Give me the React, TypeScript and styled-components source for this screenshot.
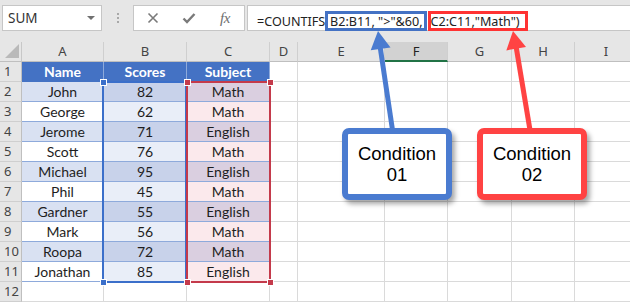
import React from 'react'
import styled, { createGlobalStyle, css } from 'styled-components'

const UI_FONT = `"Noto Sans", "Open Sans", sans-serif`
const CELL_FONT = `Lato, "Liberation Sans", sans-serif`

const GlobalStyle = createGlobalStyle`
  body {
    margin: 0;
    background: #fff;
  }
`

const BLUE = '#4a7bd0'
const RED = '#ff4343'

type Tone = 'plain' | 'blue' | 'red'

const rows: [string, number, string][] = [
    ['John', 82, 'Math'],
    ['George', 62, 'Math'],
    ['Jerome', 71, 'English'],
    ['Scott', 76, 'Math'],
    ['Michael', 95, 'English'],
    ['Phil', 45, 'Math'],
    ['Gardner', 55, 'English'],
    ['Mark', 56, 'Math'],
    ['Roopa', 72, 'Math'],
    ['Jonathan', 85, 'English'],
]

const columns = ['A', 'B', 'C', 'D', 'E', 'F', 'G', 'H', 'I']

// banded fills, [odd row, even row]
const fills: Record<string, [string, string]> = {
    A: ['#ffffff', '#d9e1f2'],
    B: ['#e9eef8', '#c8d2ea'],
    C: ['#fbe9ec', '#dacfe0'],
}

const App = () => {
    return (
        <Page>
            <GlobalStyle/>
            <FormulaBar>
                <NameBox>
                    SUM
                    <DropArrow/>
                </NameBox>
                <Grip>
                    <Dot/><Dot/><Dot/>
                </Grip>
                <FxBox>
                    <FxButton>
                        <svg width="12" height="12" viewBox="0 0 12 12">
                            <path d="M1.5 1.5 L10.5 10.5 M10.5 1.5 L1.5 10.5" stroke="#7a7a7a" strokeWidth="1.6" fill="none"/>
                        </svg>
                    </FxButton>
                    <FxButton>
                        <svg width="14" height="12" viewBox="0 0 14 12">
                            <path d="M1.5 6.5 L5 10 L12.5 2" stroke="#7a7a7a" strokeWidth="2.4" fill="none"/>
                        </svg>
                    </FxButton>
                    <FxButton>
                        <FxLabel>fx</FxLabel>
                    </FxButton>
                </FxBox>
                <FormulaInput>
                    <Segment $tone="plain">=COUNTIFS(</Segment>
                    <Segment $tone="blue">B2:B11, "&gt;"&amp;60,</Segment>
                    <Segment $tone="red">C2:C11,"Math")</Segment>
                </FormulaInput>
            </FormulaBar>

            <Sheet>
                <Corner>
                    <svg width="14" height="14" viewBox="0 0 14 14">
                        <polygon points="14,0 14,14 0,14" fill="#b9b9b9"/>
                    </svg>
                </Corner>
                {columns.map(c => (
                    <ColHead key={c} $active={c === 'F'}>{c}</ColHead>
                ))}

                <RowHead>1</RowHead>
                <TableHead>Name</TableHead>
                <TableHead>Scores</TableHead>
                <TableHead>Subject</TableHead>
                {columns.slice(3).map(c => <Cell key={c}/>)}

                {rows.map((r, i) => {
                    const band = i % 2 === 0 ? 1 : 0
                    return (
                        <React.Fragment key={r[0]}>
                            <RowHead>{i + 2}</RowHead>
                            <TableCell $fill={fills.A[band]}>{r[0]}</TableCell>
                            <TableCell $fill={fills.B[band]}>{r[1]}</TableCell>
                            <TableCell $fill={fills.C[band]}>{r[2]}</TableCell>
                            {columns.slice(3).map(c => <Cell key={c}/>)}
                        </React.Fragment>
                    )
                })}

                <RowHead>12</RowHead>
                {columns.map(c => <Cell key={c}/>)}

                <RangeBox $color="#3b6fca" $left={102} $top={39} $width={85} $height={202}>
                    <Handle $color="#3b6fca" $side="left" $edge="top"/>
                    <Handle $color="#3b6fca" $side="left" $edge="bottom"/>
                </RangeBox>
                <RangeBox $color="#c43a4b" $left={186} $top={39} $width={85} $height={202}>
                    <Handle $color="#c43a4b" $side="left" $edge="top"/>
                    <Handle $color="#c43a4b" $side="right" $edge="top"/>
                    <Handle $color="#c43a4b" $side="left" $edge="bottom"/>
                    <Handle $color="#c43a4b" $side="right" $edge="bottom"/>
                </RangeBox>
            </Sheet>

            <Arrows width="630" height="305" viewBox="0 0 630 305">
                <line x1="392.5" y1="130" x2="380" y2="46" stroke={BLUE} strokeWidth="5"/>
                <polygon points="378,31 390.5,47.4 370.7,50.2" fill={BLUE}/>
                <line x1="530" y1="130" x2="516" y2="46" stroke={RED} strokeWidth="5"/>
                <polygon points="513,31 526,47 506.3,50.4" fill={RED}/>
            </Arrows>

            <Callout $color={BLUE} $left={342}>
                Condition<br/>01
            </Callout>
            <Callout $color={RED} $left={477}>
                Condition<br/>02
            </Callout>
        </Page>
    )
}

const Page = styled.div`
  position: relative;
  width: 630px;
  height: 305px;
  overflow: hidden;
  background: #fff;
`

const FormulaBar = styled.div`
  display: flex;
  align-items: flex-start;
  height: 42px;
  box-sizing: border-box;
  padding: 5px 0 0 2px;
  background: #e6e6e6;
`

const NameBox = styled.div`
  box-sizing: border-box;
  width: 100px;
  height: 26px;
  display: flex;
  align-items: center;
  justify-content: space-between;
  padding: 0 6px 0 5px;
  background: #fff;
  border: 1px solid #c6c6c6;
  font: 13.5px ${UI_FONT};
  color: #333;
`

const DropArrow = styled.span`
  width: 0;
  height: 0;
  border-left: 4px solid transparent;
  border-right: 4px solid transparent;
  border-top: 4px solid #707070;
`

const Grip = styled.div`
  width: 31px;
  height: 26px;
  display: flex;
  flex-direction: column;
  align-items: center;
  justify-content: center;
  gap: 2px;
`

const Dot = styled.span`
  width: 2px;
  height: 2px;
  background: #a8a8a8;
`

const FxBox = styled.div`
  box-sizing: border-box;
  width: 112px;
  height: 26px;
  display: flex;
  padding-left: 1px;
  background: #fff;
  border: 1px solid #c6c6c6;
`

const FxButton = styled.div`
  width: 36px;
  display: flex;
  align-items: center;
  justify-content: center;
`

const FxLabel = styled.span`
  font: italic 15px "Liberation Serif", "DejaVu Serif", serif;
  color: #6e6e6e;
  letter-spacing: -0.5px;
`

const FormulaInput = styled.div`
  box-sizing: border-box;
  flex: 1;
  height: 26px;
  margin-left: 2px;
  padding-left: 9px;
  display: flex;
  align-items: flex-end;
  background: #fff;
  border: 1px solid #c6c6c6;
  border-right: none;
  font: 12.6px ${UI_FONT};
  color: #222;
  white-space: pre;
`

const toneColor: Record<Tone, string> = {
    plain: 'transparent',
    blue: '#4472c4',
    red: '#ff3333',
}

const Segment = styled.span<{ $tone: Tone }>`
  box-sizing: border-box;
  height: 20px;
  margin-bottom: -1px;
  line-height: 15px;
  border: 3px solid ${({ $tone }) => toneColor[$tone]};
  ${({ $tone }) => $tone === 'plain' && css`
    border-left: none;
    border-right: none;
    margin-right: -4px;
  `}
  ${({ $tone }) => $tone === 'blue' && css`
    padding: 0 1px 0 2px;
    position: relative;
    background: #fff;
  `}
  ${({ $tone }) => $tone === 'red' && css`
    margin-left: 1px;
    padding: 0 5px 0 0;
  `}
`

const Sheet = styled.div`
  position: relative;
  display: grid;
  grid-template-columns: 22px 82px 83px 83px 28px 87px 63px 64px 63px 63px;
  grid-auto-rows: 20px;
`

const headerCell = css`
  box-sizing: border-box;
  background: #e6e6e6;
  border-bottom: 1px solid #bfbfbf;
  font: 13px ${UI_FONT};
  color: #444;
  line-height: 19px;
`

const Corner = styled.div`
  ${headerCell};
  border-right: 1px solid #c8c8c8;
  display: flex;
  align-items: flex-end;
  justify-content: flex-end;
  padding: 0 2px 3px 0;
`

const ColHead = styled.div<{ $active?: boolean }>`
  ${headerCell};
  text-align: center;
  border-right: 1px solid #cfcfcf;
  ${({ $active }) => $active && css`
    background: #d2d2d2;
    border-bottom: 2px solid #217346;
    color: #222;
  `}
`

const RowHead = styled.div`
  ${headerCell};
  border-right: 1px solid #bfbfbf;
  border-bottom: 1px solid #cfcfcf;
  padding-left: 4px;
`

const Cell = styled.div`
  box-sizing: border-box;
  border-right: 1px solid #dadada;
  border-bottom: 1px solid #dadada;
  background: #fff;
`

const TableHead = styled.div`
  box-sizing: border-box;
  background: #4472c4;
  border-right: 1px solid #8eaadb;
  color: #fff;
  font: bold 14px ${CELL_FONT};
  line-height: 20px;
  text-align: center;
`

const TableCell = styled.div<{ $fill: string }>`
  box-sizing: border-box;
  background: ${({ $fill }) => $fill};
  border-right: 1px solid #fff;
  border-bottom: 1px solid #8eaadb;
  color: #1e1e1e;
  font: 14px ${CELL_FONT};
  line-height: 19px;
  text-align: center;
`

const RangeBox = styled.div<{ $color: string, $left: number, $top: number, $width: number, $height: number }>`
  position: absolute;
  box-sizing: border-box;
  left: ${({ $left }) => $left}px;
  top: ${({ $top }) => $top}px;
  width: ${({ $width }) => $width}px;
  height: ${({ $height }) => $height}px;
  border: 2px solid ${({ $color }) => $color};
`

const Handle = styled.span<{ $color: string, $side: 'left' | 'right', $edge: 'top' | 'bottom' }>`
  position: absolute;
  width: 7px;
  height: 7px;
  box-sizing: border-box;
  background: ${({ $color }) => $color};
  border: 1px solid #fff;
  ${({ $side }) => $side}: -4.5px;
  ${({ $edge }) => $edge}: -4.5px;
`

const Arrows = styled.svg`
  position: absolute;
  left: 0;
  top: 0;
  pointer-events: none;
`

const Callout = styled.div<{ $color: string, $left: number }>`
  position: absolute;
  left: ${({ $left }) => $left}px;
  top: 128px;
  box-sizing: border-box;
  width: 110px;
  height: 72px;
  padding-top: 9px;
  border: 6px solid ${({ $color }) => $color};
  border-radius: 7px;
  background: #fff;
  box-shadow: 3px 4px 5px rgba(0, 0, 0, 0.35);
  font: 18.5px "Liberation Sans", Arial, sans-serif;
  line-height: 21px;
  color: #000;
  text-align: center;
`

export default App
